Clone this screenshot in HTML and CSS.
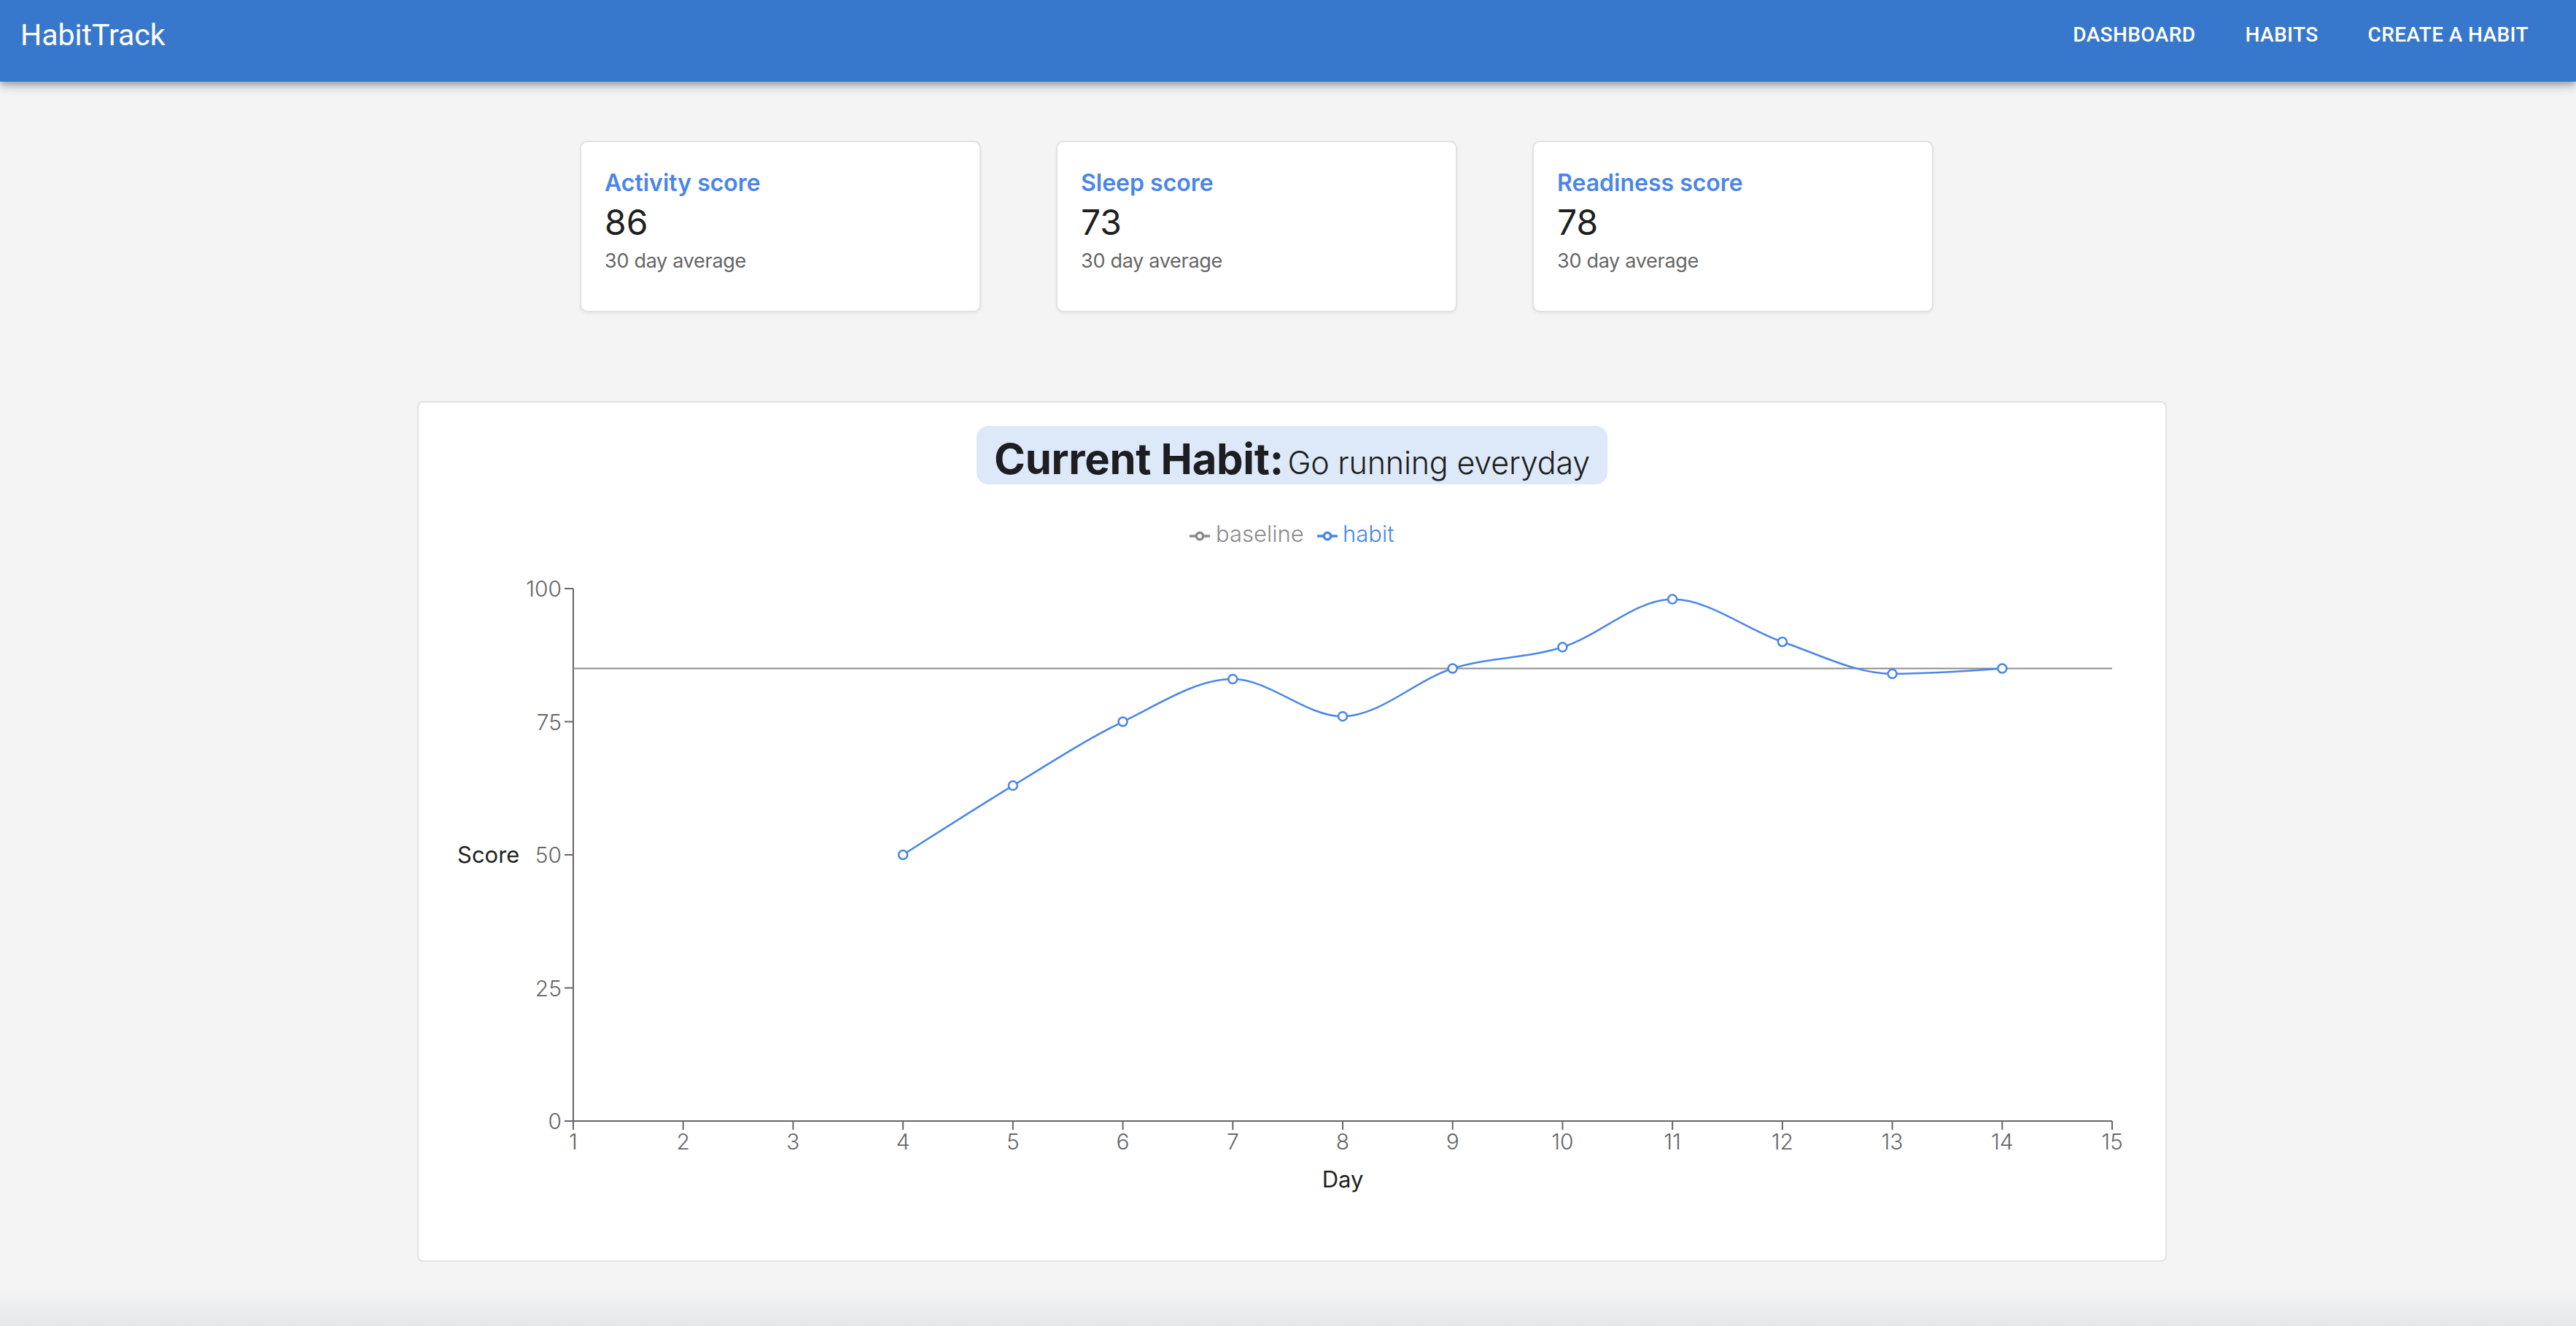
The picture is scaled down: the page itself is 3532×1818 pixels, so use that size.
FILE: index.html
```html
<!DOCTYPE html>
<html lang="en">
<head>
<meta charset="utf-8">
<title>HabitTrack</title>
<link rel="stylesheet" href="styles.css">
</head>
<body>
<header class="appbar">
  <div class="toolbar">
    <div class="brand">HabitTrack</div>
    <nav class="nav">
      <a class="nav-link" href="#">DASHBOARD</a>
      <a class="nav-link" href="#">HABITS</a>
      <a class="nav-link" href="#">CREATE A HABIT</a>
    </nav>
  </div>
</header>
<main class="page">
  <section class="stats">
    <div class="stat-card">
      <div class="stat-title">Activity score</div>
      <div class="stat-value">86</div>
      <div class="stat-sub">30 day average</div>
    </div>
    <div class="stat-card">
      <div class="stat-title">Sleep score</div>
      <div class="stat-value">73</div>
      <div class="stat-sub">30 day average</div>
    </div>
    <div class="stat-card">
      <div class="stat-title">Readiness score</div>
      <div class="stat-value">78</div>
      <div class="stat-sub">30 day average</div>
    </div>
  </section>
  <section class="chart-card">
    <div class="chart-head">
      <h2 class="habit-pill"><strong class="habit-label">Current Habit:</strong> <span class="habit-name">Go running everyday</span></h2>
    </div>
    <svg class="chart" width="2395" height="1064" viewBox="574 664 2395 1064" xmlns="http://www.w3.org/2000/svg">
      <g class="legend">
        <g transform="translate(1631,721) scale(0.875)">
          <path class="legend-icon legend-icon-base" d="M0,16h10.667A5.333,5.333,0,1,1,21.333,16H32M21.333,16A5.333,5.333,0,1,1,10.667,16"/>
        </g>
        <text class="legend-text legend-base" x="1667" y="743">baseline</text>
        <g transform="translate(1806,721) scale(0.875)">
          <path class="legend-icon legend-icon-habit" d="M0,16h10.667A5.333,5.333,0,1,1,21.333,16H32M21.333,16A5.333,5.333,0,1,1,10.667,16"/>
        </g>
        <text class="legend-text legend-habit" x="1841" y="743">habit</text>
      </g>
      <path class="axis" d="M786,807V1537M786,1537H2896"/>
      <path class="axis" d="M774,1537h12M774,1354.5h12M774,1172h12M774,989.5h12M774,807h12"/>
      <path class="axis" d="M786,1537v12M936.71,1537v12M1087.43,1537v12M1238.14,1537v12M1388.86,1537v12M1539.57,1537v12M1690.29,1537v12M1841,1537v12M1991.71,1537v12M2142.43,1537v12M2293.14,1537v12M2443.86,1537v12M2594.57,1537v12M2745.29,1537v12M2896,1537v12"/>
      <g class="tick-y">
        <text x="770" y="1548">0</text>
        <text x="770" y="1365.5">25</text>
        <text x="770" y="1183">50</text>
        <text x="770" y="1000.5">75</text>
        <text x="770" y="818">100</text>
      </g>
      <g class="tick-x">
        <text x="786" y="1576">1</text>
        <text x="936.71" y="1576">2</text>
        <text x="1087.43" y="1576">3</text>
        <text x="1238.14" y="1576">4</text>
        <text x="1388.86" y="1576">5</text>
        <text x="1539.57" y="1576">6</text>
        <text x="1690.29" y="1576">7</text>
        <text x="1841" y="1576">8</text>
        <text x="1991.71" y="1576">9</text>
        <text x="2142.43" y="1576">10</text>
        <text x="2293.14" y="1576">11</text>
        <text x="2443.86" y="1576">12</text>
        <text x="2594.57" y="1576">13</text>
        <text x="2745.29" y="1576">14</text>
        <text x="2896" y="1576">15</text>
      </g>
      <text class="axis-label" x="627" y="1183">Score</text>
      <text class="axis-label axis-label-x" x="1841" y="1628">Day</text>
      <path class="line-base" d="M786,916.5H2896"/>
      <path class="line-habit" d="M1238.14,1172C1288.38,1139.76 1338.62,1107.52 1388.86,1077.1C1439.1,1046.68 1489.33,1013.83 1539.57,989.5C1589.81,965.17 1640.05,931.1 1690.28,931.1C1740.52,931.1 1790.76,982.2 1841,982.2C1891.24,982.2 1941.48,932.32 1991.71,916.5C2041.95,900.68 2092.19,903.12 2142.43,887.3C2192.67,871.48 2242.9,821.6 2293.14,821.6C2343.38,821.6 2393.62,862.97 2443.86,880C2494.1,897.03 2544.33,923.8 2594.57,923.8C2644.81,923.8 2695.05,920.15 2745.28,916.5"/>
      <g class="dots">
        <circle cx="1238.14" cy="1172" r="6"/>
        <circle cx="1388.86" cy="1077.1" r="6"/>
        <circle cx="1539.57" cy="989.5" r="6"/>
        <circle cx="1690.28" cy="931.1" r="6"/>
        <circle cx="1841" cy="982.2" r="6"/>
        <circle cx="1991.71" cy="916.5" r="6"/>
        <circle cx="2142.43" cy="887.3" r="6"/>
        <circle cx="2293.14" cy="821.6" r="6"/>
        <circle cx="2443.86" cy="880" r="6"/>
        <circle cx="2594.57" cy="923.8" r="6"/>
        <circle cx="2745.28" cy="916.5" r="6"/>
      </g>
    </svg>
  </section>
  <div class="bottom-shade"></div>
</main>
</body>
</html>
```

FILE: styles.css
```css
html, body {
  margin: 0;
  padding: 0;
  overflow: hidden;
}

body {
  background: #f4f4f4;
  font-family: Inter, "Noto Sans", "Liberation Sans", sans-serif;
  color: #222;
}

.appbar {
  background: #3778cc;
  height: 112px;
  box-sizing: border-box;
  padding-bottom: 16px;
  box-shadow: 0 4px 8px -2px rgba(0,0,0,0.2), 0 8px 10px 0 rgba(0,0,0,0.14), 0 2px 20px 0 rgba(0,0,0,0.12);
  position: relative;
  z-index: 2;
}

.toolbar {
  height: 96px;
  display: flex;
  align-items: center;
  justify-content: space-between;
  padding: 0 49px 0 28px;
}

.brand {
  font-family: Roboto, "Liberation Sans", sans-serif;
  font-size: 41px;
  line-height: 96px;
  color: #fff;
  font-weight: 400;
}

.nav {
  display: flex;
  gap: 36px;
}

.nav-link {
  font-family: Roboto, "Liberation Sans", sans-serif;
  font-size: 28px;
  font-weight: 500;
  letter-spacing: 0.4px;
  line-height: 96px;
  color: #fff;
  text-decoration: none;
  padding: 0 16px;
}

.page {
  display: flex;
  flex-direction: column;
}

.stats {
  display: flex;
  justify-content: center;
  gap: 103px;
  padding-right: 86px;
  margin-top: 81px;
}

.stat-card {
  width: 550px;
  height: 235px;
  box-sizing: border-box;
  background: #fff;
  border: 2px solid #e2e2e2;
  border-radius: 10px;
  box-shadow: 0 2px 4px rgba(0,0,0,0.06);
  padding: 32px 32px 0;
}

.stat-title {
  font-size: 32px;
  font-weight: 600;
  line-height: 48px;
  color: #4a86e8;
}

.stat-value {
  font-size: 48px;
  font-weight: 400;
  line-height: 60px;
  color: #1f1f1f;
}

.stat-sub {
  font-size: 27px;
  font-weight: 400;
  letter-spacing: -0.3px;
  line-height: 46px;
  color: #666;
}

.chart-card {
  margin: 122px 0 0 572px;
  width: 2399px;
  height: 1180px;
  box-sizing: border-box;
  background: #fff;
  border: 2px solid #e2e2e2;
  border-radius: 8px;
  padding-top: 32px;
}

.chart-head {
  text-align: center;
  height: 80px;
}

.habit-pill {
  display: inline-block;
  margin: 0;
  height: 80px;
  box-sizing: border-box;
  padding: 10px 24px 0;
  line-height: 70px;
  background: #dde8f9;
  border-radius: 16px;
  color: #1d1e21;
  white-space: nowrap;
}

.habit-label {
  font-size: 58px;
  font-weight: 700;
  letter-spacing: -0.3px;
}

.habit-name {
  font-size: 43px;
  font-weight: 300;
  letter-spacing: -0.2px;
}

.chart {
  display: block;
}

.legend-text {
  font-family: Inter, "Noto Sans", sans-serif;
  font-size: 31px;
  font-weight: 300;
}

.legend-base {
  fill: #8a8a8a;
}

.legend-habit {
  fill: #4a86e8;
}

.legend-icon {
  fill: none;
  stroke-width: 4;
}

.legend-icon-base {
  stroke: #8a8a8a;
}

.legend-icon-habit {
  stroke: #4a86e8;
}

.axis {
  fill: none;
  stroke: #666;
  stroke-width: 2;
}

.tick-y text,
.tick-x text {
  font-family: Inter, "Noto Sans", sans-serif;
  font-size: 30px;
  font-weight: 300;
  fill: #666;
}

.tick-y text {
  text-anchor: end;
}

.tick-x text {
  text-anchor: middle;
}

.axis-label {
  font-family: Inter, "Noto Sans", sans-serif;
  font-size: 31px;
  font-weight: 400;
  fill: #222;
}

.axis-label-x {
  text-anchor: middle;
}

.line-base {
  fill: none;
  stroke: #8c8c8c;
  stroke-width: 2;
}

.line-habit {
  fill: none;
  stroke: #4a86e8;
  stroke-width: 2.5;
}

.dots circle {
  fill: #fff;
  stroke: #4a86e8;
  stroke-width: 2.5;
}

.bottom-shade {
  margin-top: 37px;
  height: 51px;
  background: linear-gradient(#f4f4f4, #e6e7e9);
}
```
